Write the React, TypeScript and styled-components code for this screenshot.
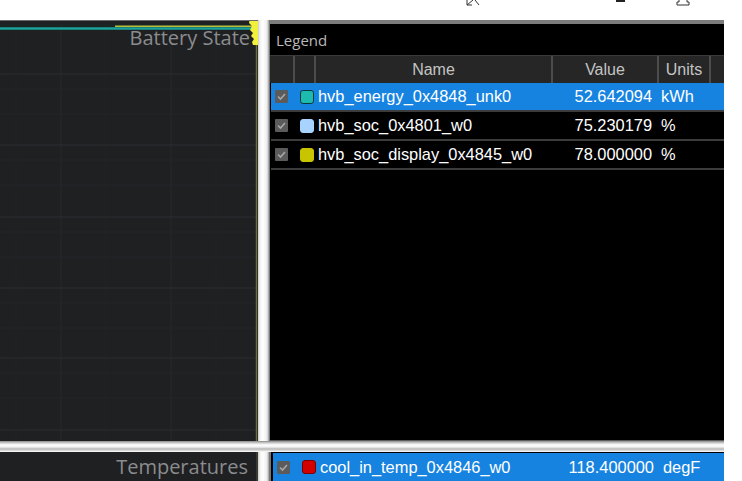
import React from "react";
import styled, { createGlobalStyle } from "styled-components";

const GlobalStyle = createGlobalStyle`
  html, body {
    margin: 0;
    padding: 0;
    background: #ffffff;
    overflow: hidden;
  }
`;

type Signal = {
  name: string;
  value: string;
  units: string;
  color: string;
  edge: string;
  selected?: boolean;
};

const batterySignals: Signal[] = [
  { name: "hvb_energy_0x4848_unk0", value: "52.642094", units: "kWh", color: "#1dbab0", edge: "#0a3a38", selected: true },
  { name: "hvb_soc_0x4801_w0", value: "75.230179", units: "%", color: "#a9d3ff", edge: "#a9d3ff" },
  { name: "hvb_soc_display_0x4845_w0", value: "78.000000", units: "%", color: "#c9c400", edge: "#c9c400" },
];

const tempSignal: Signal = {
  name: "cool_in_temp_0x4846_w0",
  value: "118.400000",
  units: "degF",
  color: "#d30000",
  edge: "#7a0000",
  selected: true,
};

const COLS = "25px 21px 237px 106px 52px 1fr";

const App: React.FC = () => {
  return (
    <>
      <GlobalStyle />
      <Page>
        <Toolbar>
          <ToolGlyph $left={466} width="14" height="6" viewBox="0 0 14 6">
            <path d="M1 0 L1 5 L6 5 M1 5 L7 0 M9 0 L13 5" stroke="#333" strokeWidth="1" fill="none" />
          </ToolGlyph>
          <ToolGlyph $left={136} width="10" height="4" viewBox="0 0 10 4">
            <rect x="0" y="0" width="9" height="2" fill="#222" />
          </ToolGlyph>
          <ToolGlyph $left={50} width="14" height="6" viewBox="0 0 14 6">
            <path d="M3 0 L3 2 L1 2 L1 5 L13 5 L13 2 L11 2 L11 0" stroke="#333" strokeWidth="1" fill="none" />
          </ToolGlyph>
        </Toolbar>

        <PlotPanel>
          <ChartCanvas width="258" height="420" viewBox="0 0 258 420" preserveAspectRatio="none">
            {[16, 106, 216].map((x) => (
              <line key={"vm" + x} x1={x} y1="3" x2={x} y2="420" stroke="#222326" strokeWidth="1" />
            ))}
            {[61, 171].map((x) => (
              <line key={"vM" + x} x1={x} y1="3" x2={x} y2="420" stroke="#27282b" strokeWidth="1" />
            ))}
            {[53, 124, 196, 267, 337, 409].map((y) => (
              <g key={"h" + y}>
                <line x1="0" y1={y} x2="256" y2={y} stroke="#2c2d30" strokeWidth="1.2" />
                <line x1="0" y1={y + 15} x2="256" y2={y + 15} stroke="#232427" strokeWidth="1" />
                <line x1="0" y1={y + 40} x2="256" y2={y + 40} stroke="#242528" strokeWidth="1" />
              </g>
            ))}
            <line x1="0" y1="4" x2="256" y2="4" stroke="#1a2a2a" strokeWidth="1" />
            <line x1="0" y1="7.5" x2="256" y2="7.5" stroke="#1aa39a" strokeWidth="2.5" />
            <line x1="115" y1="5.2" x2="256" y2="5.2" stroke="#b8bf3a" strokeWidth="1.6" />
            <line x1="256.5" y1="0" x2="256.5" y2="420" stroke="#6e6d3c" strokeWidth="1.5" />
          </ChartCanvas>
          <PlotTitle>Battery State</PlotTitle>
          <CursorMark width="9" height="27" viewBox="0 0 9 27">
            <path d="M1 0 L9 0 L9 27 L4 27 L3 24 L5 21 L2 18 L4 15 L1 12 L3 8 L0 5 Z" fill="#f2f03c" />
          </CursorMark>
        </PlotPanel>

        <VSplit $row={2} />

        <LegendPanel>
          <LegendHeader>Legend</LegendHeader>
          <ColumnHeader>
            <HeadCell />
            <HeadCell />
            <HeadCell $align="center">Name</HeadCell>
            <HeadCell $align="center">Value</HeadCell>
            <HeadCell $align="center">Units</HeadCell>
            <HeadCell />
          </ColumnHeader>
          {batterySignals.map((s) => (
            <SignalRow key={s.name} signal={s} />
          ))}
        </LegendPanel>

        <HSplit />

        <BottomPlot>
          <PlotTitle>Temperatures</PlotTitle>
        </BottomPlot>

        <VSplit $row={4} />

        <BottomLegend>
          <SignalRow signal={tempSignal} />
        </BottomLegend>
      </Page>
    </>
  );
};

const SignalRow: React.FC<{ signal: Signal }> = ({ signal }) => (
  <Row $selected={!!signal.selected}>
    <Cell>
      <CheckBox>
        <svg width="11" height="11" viewBox="0 0 11 11">
          <path d="M2 5.5 L4.5 8 L9 3" stroke="#a8a8a8" strokeWidth="1.6" fill="none" />
        </svg>
      </CheckBox>
    </Cell>
    <Cell>
      <Swatch $color={signal.color} $edge={signal.edge} />
    </Cell>
    <NameCell>{signal.name}</NameCell>
    <ValueCell>{signal.value}</ValueCell>
    <UnitCell>{signal.units}</UnitCell>
    <Cell />
  </Row>
);

const Page = styled.div`
  display: grid;
  grid-template-columns: 258px 12px 454px 18px;
  grid-template-rows: 20px 421px 11px 29px;
  width: 742px;
  height: 481px;
  background: #ffffff;
`;

const Toolbar = styled.div`
  grid-column: 1 / -1;
  grid-row: 1;
  display: flex;
  align-items: flex-start;
  background: #ffffff;
`;

const ToolGlyph = styled.svg<{ $left: number }>`
  display: block;
  margin-left: ${(p) => p.$left}px;
`;

const PlotPanel = styled.div`
  grid-column: 1;
  grid-row: 2;
  position: relative;
  display: flex;
  justify-content: flex-end;
  align-items: flex-start;
  background: #1f2022;
  border-top: 1px solid #6a6a6a;
  overflow: hidden;
`;

const ChartCanvas = styled.svg`
  position: absolute;
  inset: 0;
  width: 100%;
  height: 100%;
`;

const PlotTitle = styled.div`
  position: relative;
  font-family: "Open Sans", "Noto Sans", sans-serif;
  font-size: 20px;
  font-weight: 500;
  line-height: 28px;
  color: #8b8c8e;
  padding-right: 8px;
  margin-top: 3px;
`;

const CursorMark = styled.svg`
  position: absolute;
  top: -3px;
  right: 0;
`;

const VSplit = styled.div<{ $row: number }>`
  grid-column: 2;
  grid-row: ${(p) => p.$row};
  background: linear-gradient(to right, #c9c9c9 0, #f3f3f3 2px, #ffffff 5px, #ececec 9px, #9a9a9a 11px, #5a5a5a 12px);
`;

const LegendPanel = styled.div`
  grid-column: 3;
  grid-row: 2;
  display: flex;
  flex-direction: column;
  background: #000000;
  border-top: 4px solid #7c7c7c;
  border-bottom: 1px solid #5c5c5c;
`;

const LegendHeader = styled.div`
  height: 31px;
  display: flex;
  align-items: center;
  padding-left: 6px;
  font-family: "Open Sans", "Noto Sans", sans-serif;
  font-size: 15px;
  color: #b9b9b9;
`;

const ColumnHeader = styled.div`
  display: grid;
  grid-template-columns: ${COLS};
  height: 27px;
  background: #262626;
  border-top: 1px solid #3a3a3a;
`;

const HeadCell = styled.div<{ $align?: string }>`
  display: flex;
  align-items: center;
  justify-content: ${(p) => p.$align || "flex-start"};
  border-right: 2px solid #4c4c4c;
  font-family: "Liberation Sans", Arial, sans-serif;
  font-size: 16px;
  color: #c4c4c4;
  &:last-child {
    border-right: none;
  }
`;

const Row = styled.div<{ $selected: boolean }>`
  display: grid;
  grid-template-columns: ${COLS};
  height: 27px;
  margin-left: 1px;
  background: ${(p) => (p.$selected ? "#1783e0" : "#000000")};
  border-bottom: 2px solid #3c3c3c;
  font-family: "Liberation Sans", Arial, sans-serif;
  font-size: 16.4px;
  color: #ffffff;
`;

const Cell = styled.div`
  display: flex;
  align-items: center;
  white-space: nowrap;
`;

const NameCell = styled(Cell)`
  padding-left: 1px;
`;

const ValueCell = styled(Cell)`
  justify-content: flex-end;
  padding-right: 8px;
`;

const UnitCell = styled(Cell)`
  padding-left: 1px;
`;

const CheckBox = styled.div`
  width: 13px;
  height: 13px;
  margin-left: 4px;
  display: flex;
  align-items: center;
  justify-content: center;
  background: #5b5b5b;
  border-radius: 1px;
`;

const Swatch = styled.div<{ $color: string; $edge: string }>`
  width: 12px;
  height: 12px;
  margin-left: 4px;
  border-radius: 3px;
  background: ${(p) => p.$color};
  border: 1px solid ${(p) => p.$edge};
`;

const HSplit = styled.div`
  grid-column: 1 / 4;
  grid-row: 3;
  background: linear-gradient(to bottom, #8a8a8a 0, #d0d0d0 2px, #ffffff 4px, #f0f0f0 6px, #b8b8b8 8px, #e6e6e6 10px, #ffffff 11px);
`;

const BottomPlot = styled.div`
  grid-column: 1;
  grid-row: 4;
  display: flex;
  justify-content: flex-end;
  align-items: center;
  background: #1f2022;
  border-right: 2px solid #3a3a30;
  & > div {
    margin-top: 0;
  }
`;

const BottomLegend = styled.div`
  grid-column: 3;
  grid-row: 4;
  display: flex;
  flex-direction: column;
  justify-content: flex-end;
  background: #000000;
  border-left: 1px solid #777;
  padding-left: 1px;
  & > div {
    height: 28px;
    border-bottom: none;
  }
`;

export default App;
